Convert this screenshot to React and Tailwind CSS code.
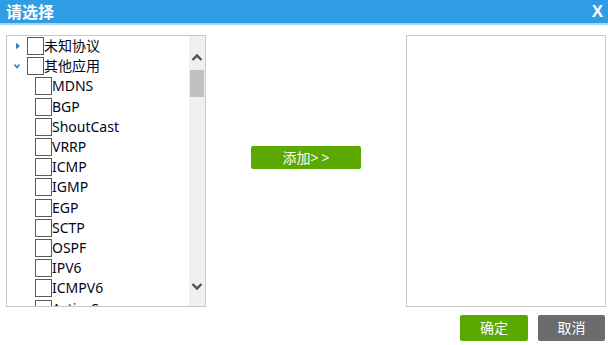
import React from 'react'

const protocols = ['MDNS', 'BGP', 'ShoutCast', 'VRRP', 'ICMP', 'IGMP', 'EGP', 'SCTP', 'OSPF', 'IPV6', 'ICMPV6', 'ActiveSync']

function Box() {
  return <span className="w-[17px] h-[18px] border border-[#5a5a5a] bg-white shrink-0" />
}

function Row({ indent, arrow, label }) {
  return (
    <div className="flex items-center h-[20.2px] shrink-0">
      <span className={`${indent ? 'w-[28px]' : 'w-[20px]'} flex justify-center shrink-0`}>
        {arrow === 'right' && (
          <svg width="6" height="8" viewBox="0 0 6 8" className="ml-[1px]">
            <path d="M1.5 1.5 L4.5 4 L1.5 6.5 Z" fill="#2f7fc4" stroke="#2f7fc4" strokeWidth="1" strokeLinejoin="round" />
          </svg>
        )}
        {arrow === 'down' && (
          <svg width="8" height="6" viewBox="0 0 8 6" className="ml-[-1px]">
            <path d="M1.5 1.5 L4 4.5 L6.5 1.5" fill="none" stroke="#2f7fc4" strokeWidth="1.6" />
          </svg>
        )}
      </span>
      <Box />
      <span className="text-[14px] leading-none text-[#050518] whitespace-nowrap">{label}</span>
    </div>
  )
}

export default function App() {
  return (
    <div className="w-[608px] h-[345px] bg-white overflow-hidden" style={{ fontFamily: '"Noto Sans", "Noto Sans CJK SC", sans-serif' }}>
      <div className="h-[23px] bg-[#2f9ce4] flex items-center justify-between px-[6px] text-white font-bold">
        <span className="text-[16px] leading-none">请选择</span>
        <span className="text-[17px] leading-none mr-[-1px]" style={{ fontFamily: '"Liberation Sans", sans-serif' }}>X</span>
      </div>
      <div className="h-[2px] bg-[#a6d4f4]" />

      <div className="flex pl-[6px] pt-[10px]">
        <div className="w-[200px] h-[272px] border border-[#c8c8c8] flex overflow-hidden">
          <div className="flex-1 flex flex-col overflow-hidden">
            <Row arrow="right" label="未知协议" />
            <Row arrow="down" label="其他应用" />
            {protocols.map(p => (
              <Row key={p} indent label={p} />
            ))}
          </div>
          <div className="w-[16px] bg-[#f0f0f0] flex flex-col items-center">
            <svg width="12" height="10" viewBox="0 0 12 10" className="mt-[17px]">
              <path d="M1.5 7 L6 2.5 L10.5 7" fill="none" stroke="#505050" strokeWidth="2.4" />
            </svg>
            <div className="mt-[7px] w-[14px] h-[27px] bg-[#c1c1c1]" />
            <div className="flex-1" />
            <svg width="12" height="10" viewBox="0 0 12 10" className="mb-[15px]">
              <path d="M1.5 3 L6 7.5 L10.5 3" fill="none" stroke="#505050" strokeWidth="2.4" />
            </svg>
          </div>
        </div>

        <div className="w-[200px] flex justify-center pt-[111px]">
          <button className="w-[110px] h-[23px] bg-[#5ba800] rounded-[2px] text-white text-[14px] leading-none">
            添加&gt;<span className="ml-[3px]">&gt;</span>
          </button>
        </div>

        <div className="w-[200px] h-[272px] border border-[#c8c8c8]" />
      </div>

      <div className="flex justify-end gap-[10px] pr-[3px] pt-[8px]">
        <button className="w-[68px] h-[26px] bg-[#5ba800] rounded-[2px] text-white text-[14px] leading-none">确定</button>
        <button className="w-[67px] h-[26px] bg-[#6b6b6b] rounded-[2px] text-white text-[14px] leading-none">取消</button>
      </div>
    </div>
  )
}
